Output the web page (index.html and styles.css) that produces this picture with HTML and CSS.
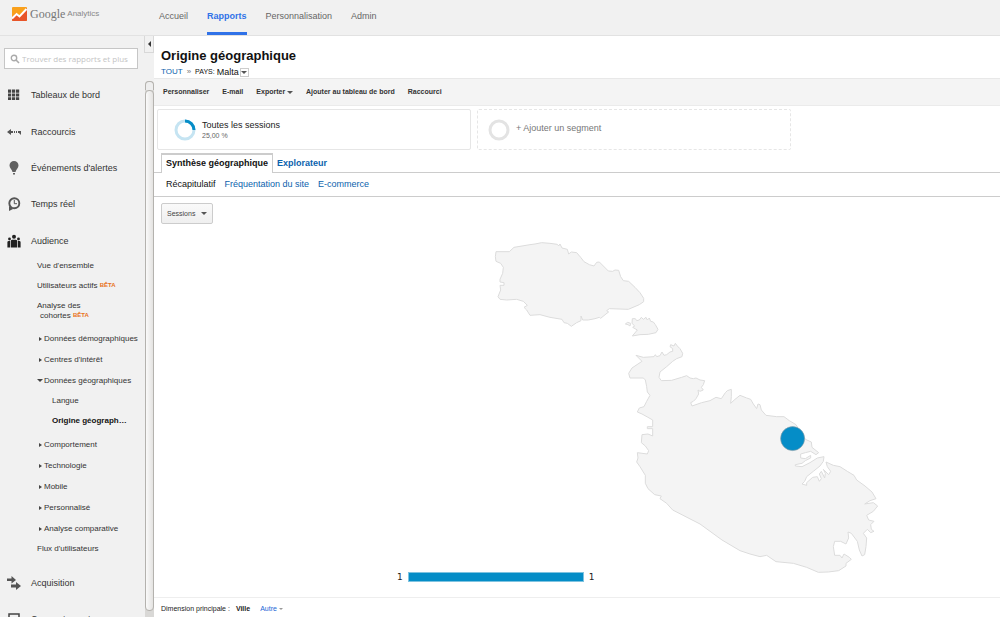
FILE: index.html
```html
<!DOCTYPE html>
<html lang="fr">
<head>
<meta charset="utf-8">
<title>Google Analytics – Origine géographique</title>
<link rel="stylesheet" href="styles.css">
</head>
<body>
<header class="topbar">
  <a class="brand" href="#">
    <svg class="brand-mark" viewBox="0 0 15 14" aria-hidden="true">
      <rect width="15" height="14" rx="1" fill="#f9a01b"/>
      <path d="M0 10 4 6l3 3 8-8v12a1 1 0 0 1-1 1H1a1 1 0 0 1-1-1z" fill="#e8552a"/>
      <path d="M0 11.500 4.500 7l3 2.500L14.500 2" fill="none" stroke="#fff" stroke-width="2"/>
    </svg>
    <span class="brand-google">Google</span>
    <span class="brand-product">Analytics</span>
  </a>
  <nav class="topnav">
    <a href="#">Accueil</a>
    <a href="#" class="active">Rapports</a>
    <a href="#">Personnalisation</a>
    <a href="#">Admin</a>
  </nav>
</header>

<div class="layout">
  <aside class="sidebar">
    <div class="side-content">
      <label class="search">
        <svg viewBox="0 0 10 10" aria-hidden="true"><circle cx="4" cy="4" r="2.700" fill="none" stroke="#aaa" stroke-width="1.400"/><path d="m6 6 3 3" stroke="#aaa" stroke-width="1.600"/></svg>
        <input type="text" placeholder="Trouver des rapports et plus" aria-label="Trouver des rapports et plus">
      </label>
      <nav>
        <ul class="main-items">
          <li><a href="#"><svg viewBox="0 0 14 14" aria-hidden="true"><path d="M1 1.500h3.200v3.200H1zm4 0h3.200v3.200H5zm4 0h3.200v3.200H9zM1 5.400h3.200v3.200H1zm4 0h3.200v3.200H5zm4 0h3.200v3.200H9zM1 9.300h3.200v2.700H1zm4 0h3.200v2.700H5zm4 0h3.200v2.700H9z" fill="#444"/></svg>Tableaux de bord</a></li>
          <li><a href="#"><svg viewBox="0 0 14 14" aria-hidden="true"><path d="M0 7l4-3v2h2v2H4v2zM7 6h1v2H7zm2 0h1v2H9zm2 0h3v4l-2-2h-1z" fill="#555"/></svg>Raccourcis</a></li>
          <li><a href="#"><svg viewBox="0 0 14 14" aria-hidden="true"><path d="M7 0a4.500 4.500 0 0 1 4.500 4.500C11.500 7 9 8.500 8.500 11h-3C5 8.500 2.500 7 2.500 4.500A4.500 4.500 0 0 1 7 0zM6 12h2v1.500H6z" fill="#606060"/></svg>Événements d'alertes</a></li>
          <li><a href="#"><svg viewBox="0 0 14 14" aria-hidden="true"><circle cx="7.300" cy="6.300" r="5" fill="none" stroke="#555" stroke-width="1.900"/><path d="M2 9v5l4-2z" fill="#555"/><path d="M7.300 3v3.700H10" fill="none" stroke="#555"/></svg>Temps réel</a></li>
          <li><a href="#"><svg viewBox="0 0 14 14" aria-hidden="true"><g fill="#222"><circle cx="7" cy="2.700" r="2"/><circle cx="2.500" cy="5" r="1.400"/><circle cx="11.500" cy="5" r="1.400"/><path d="M3.700 13.500V7.300q0-1.500 1.500-1.500h3.600q1.500 0 1.500 1.500v6.200zM.4 13.500V8.300q0-1.300 1.300-1.300H3v6.500zM13.600 13.500V8.300q0-1.300-1.300-1.300H11v6.500z"/></g></svg>Audience</a></li>
        </ul>
        <ul class="sub-items">
          <li><a href="#">Vue d'ensemble</a></li>
          <li><a href="#">Utilisateurs actifs <sup>BÊTA</sup></a></li>
          <li class="two-lines"><a href="#">Analyse des<br>cohortes <sup>BÊTA</sup></a></li>
          <li class="group"><a href="#">Données démographiques</a></li>
          <li class="group"><a href="#">Centres d'intérêt</a></li>
          <li class="group open"><a href="#">Données géographiques</a>
            <ul class="leaf-items">
              <li><a href="#">Langue</a></li>
              <li><a href="#" class="current">Origine géograph…</a></li>
            </ul>
          </li>
          <li class="group"><a href="#">Comportement</a></li>
          <li class="group"><a href="#">Technologie</a></li>
          <li class="group"><a href="#">Mobile</a></li>
          <li class="group"><a href="#">Personnalisé</a></li>
          <li class="group"><a href="#">Analyse comparative</a></li>
          <li><a href="#">Flux d'utilisateurs</a></li>
        </ul>
        <ul class="main-items tail">
          <li><a href="#"><svg viewBox="0 0 14 14" aria-hidden="true"><path d="M0 2.500h4.500V0L9 4 4.500 7.500V5H0zM4 8.500h5V6l5 4-5 4v-2.500H4z" fill="#555"/></svg>Acquisition</a></li>
          <li><a href="#"><svg viewBox="0 0 14 14" aria-hidden="true"><path d="M2 2h10v8H2z" fill="none" stroke="#444" stroke-width="1.500"/></svg>Comportement</a></li>
        </ul>
      </nav>
    </div>
    <div class="rail">
      <button class="collapse" aria-label="Réduire le menu"></button>
      <div class="track"><span class="track-up"></span><span class="thumb"></span></div>
    </div>
  </aside>

  <main class="report">
    <h1>Origine géographique</h1>
    <div class="crumbs">
      <a href="#">TOUT</a><span class="sep">»</span><span class="dim">PAYS:</span><span class="value">Malta</span>
      <button class="crumb-menu" aria-label="Changer de pays"><i class="caret"></i></button>
    </div>
    <div class="toolbar">
      <button>Personnaliser</button>
      <button>E-mail</button>
      <button>Exporter <i class="caret"></i></button>
      <button>Ajouter au tableau de bord</button>
      <button>Raccourci</button>
    </div>
    <div class="segments">
      <section class="segment">
        <svg viewBox="0 0 22 22" aria-hidden="true"><circle cx="11" cy="11" r="9" fill="none" stroke="#c5e4f2" stroke-width="3"/><path d="M11 2a9 9 0 0 1 9 9" fill="none" stroke="#058dc7" stroke-width="3"/></svg>
        <div><div class="segment-name">Toutes les sessions</div><div class="segment-share">25,00 %</div></div>
      </section>
      <button class="segment add">
        <svg viewBox="0 0 22 22" aria-hidden="true"><circle cx="11" cy="11" r="9" fill="none" stroke="#e3e3e3" stroke-width="3"/></svg>
        <span>+ Ajouter un segment</span>
      </button>
    </div>
    <nav class="tabs">
      <a href="#" class="selected">Synthèse géographique</a>
      <a href="#">Explorateur</a>
    </nav>
    <nav class="subtabs">
      <a href="#" class="selected">Récapitulatif</a>
      <a href="#">Fréquentation du site</a>
      <a href="#">E-commerce</a>
    </nav>
    <button class="metric">Sessions <i class="caret"></i></button>
    <svg class="map" viewBox="154 224 846 343" role="img" aria-label="Carte de Malte">
      <g fill="#f4f4f4" stroke="#dcdcdc" stroke-width="3" stroke-linejoin="round">
        <g transform="translate(480 230) scale(.33333)">
          <path d="M48 65 88 65 102 52 150 44 165 42 185 38 210 40 232 43 236 48 240 42 246 54 262 58 266 72 274 66 290 68 302 82 312 95 328 104 342 108 350 97 358 96 370 108 385 123 398 124 405 120 416 121 422 140 430 152 446 154 465 172 480 188 491 205 491 215 478 224 445 238 388 236 380 242 386 246 378 252 362 265 358 262 345 266 325 270 308 270 303 258 303 272 290 278 274 289 262 280 252 278 246 268 210 262 180 254 150 256 140 240 132 232 142 226 130 214 110 208 80 210 60 208 54 200 62 180 60 166 72 166 72 158 60 156 60 148 68 130 70 112 62 100 48 94 46 80Z"/>
          <path d="M457 266 466 266 470 272 478 270 484 262 490 268 498 262 502 270 508 264 512 274 520 276 526 284 534 298 528 308 505 313 480 314 457 318 472 300 458 292 464 288 456 280Z"/>
          <path d="M436 282 443 277 452 280 450 288 444 284Z"/>
        </g>
        <g transform="translate(620 330) scale(.33333)">
          <path d="M48 76 70 82 102 80 106 74 110 80 120 77 126 66 132 76 140 74 150 66 158 64 158 56 150 50 152 44 162 48 166 40 172 48 180 56 188 70 186 80 170 86 158 94 140 110 120 126 117 142 124 152 155 151 185 142 200 137 210 144 220 146 228 144 240 150 254 152 250 164 244 172 250 180 240 184 234 180 236 192 228 206 220 214 212 218 216 228 245 218 270 212 288 202 304 206 316 188 322 182 334 178 334 200 332 220 345 208 360 196 380 204 392 208 400 222 410 236 414 222 420 224 424 240 438 256 470 260 492 260 508 272 528 284 556 328 574 336 576 352 596 368 588 374 572 364 556 368 542 372 542 384 556 386 572 376 572 384 556 392 546 400 526 404 526 408 546 410 570 398 592 384 612 380 610 394 600 408 580 424 560 440 554 454 546 462 560 466 560 458 578 442 592 440 598 454 604 446 598 432 604 424 614 444 616 430 610 418 626 434 632 424 622 410 618 396 640 406 660 410 682 424 702 436 710 450 735 468 756 486 768 506 750 512 734 522 760 518 773 528 760 544 740 556 746 570 762 574 752 584 754 598 762 604 752 608 742 598 730 610 740 624 738 650 734 674 726 678 718 660 712 634 694 610 684 606 686 624 678 642 662 634 644 634 640 650 644 676 660 676 666 684 672 672 688 682 694 688 678 700 678 708 656 722 625 726 595 727 560 712 520 700 468 695 440 676 420 680 390 672 360 662 306 630 240 582 158 540 140 520 120 506 124 498 104 494 84 476 76 460 76 436 60 410 50 396 54 384 52 368 82 372 86 362 76 348 64 338 66 314 84 312 98 318 98 296 82 296 82 290 98 290 98 270 84 262 66 252 52 246 58 234 72 230 80 214 90 196 82 186 80 170 76 150 70 144 30 144 26 130 36 114 66 94Z"/>
        </g>
      </g>
      <circle cx="792.600" cy="438.600" r="12" fill="#058dc7" stroke="#8a9aa3" stroke-width=".6"/>
    </svg>
    <div class="legend"><span>1</span><span class="legend-bar"></span><span>1</span></div>
    <div class="dimension">
      <span>Dimension principale :</span><strong>Ville</strong><a href="#">Autre <i class="caret"></i></a>
    </div>
  </main>
</div>
</body>
</html>
```
FILE: styles.css
```css
* { box-sizing: border-box; }

body {
  margin: 0;
  height: 100vh;
  display: flex;
  flex-direction: column;
  overflow: hidden;
  background: #fff;
  color: #222;
  font-family: "Liberation Sans", Arial, sans-serif;
  font-size: 9px;
  line-height: 12px;
}

a { color: #0b62ad; text-decoration: none; }
ul { margin: 0; padding: 0; list-style: none; }
button { margin: 0; padding: 0; border: 0; background: none; color: inherit; font: inherit; }

.caret {
  display: inline-block;
  vertical-align: middle;
  border: 3px solid transparent;
  border-top-color: #555;
  border-bottom-width: 0;
}

/* Top bar */
.topbar {
  flex: none;
  display: flex;
  height: 36px;
  background: #f1f1f1;
  border-bottom: 1px solid #e2e2e2;
}
.brand {
  display: flex;
  align-items: center;
  width: 159px;
  padding: 0 0 7px 12px;
  color: #777;
}
.brand-mark { width: 15px; height: 14px; margin-right: 3px; }
.brand-google { font-family: "Liberation Serif", serif; font-size: 12px; margin-right: 2px; }
.brand-product { font-size: 8px; line-height: 14px; color: #888; }
.topnav { display: flex; gap: 19px; }
.topnav a { padding-top: 10px; color: #666; }
.topnav .active { color: #3072e8; font-weight: bold; border-bottom: 3px solid #3072e8; }

.layout { flex: 1; display: flex; min-height: 0; }

/* Sidebar */
.sidebar { flex: none; display: flex; width: 154px; background: #f1f1f1; font-size: 8px; }
.side-content { width: 144px; overflow: hidden; }
.sidebar a { color: #333; }
.search {
  display: flex;
  align-items: center;
  height: 21px;
  margin: 12px 6px 8px 4px;
  padding-left: 5px;
  background: #fff;
  border: 1px solid #c6c6c6;
}
.search svg { flex: none; width: 10px; height: 10px; margin-right: 2px; }
.search input {
  flex: 1;
  min-width: 0;
  padding: 0;
  border: 0;
  outline: 0;
  background: none;
  font-family: "Open Sans", sans-serif;
  font-size: 8px;
}
.search input::placeholder { color: #c4c4c4; }
.main-items { display: flex; flex-direction: column; height: 182px; }
.main-items li { flex: 1; display: flex; }
.main-items a { display: flex; align-items: center; gap: 10px; padding-left: 7px; font-size: 9px; }
.main-items svg { width: 14px; height: 14px; }
.main-items.tail { height: 72px; margin-top: 6px; }

.sub-items { margin-top: -3px; padding-left: 37px; white-space: nowrap; line-height: 20px; }
.sub-items sup { color: #e8711c; font-size: 6px; font-weight: bold; line-height: 1; vertical-align: 1px; }
.sub-items .two-lines { padding: 5px 0 7px 3px; line-height: 10px; text-indent: -3px; }
.group > a { display: flex; align-items: center; gap: 2px; padding-left: 2px; line-height: 21px; }
.group > a::before {
  content: "";
  width: 0;
  border: 2px solid transparent;
  border-left: 3px solid #444;
  border-right-width: 0;
}
.group.open > a { padding-left: 0; gap: 1px; }
.group.open > a::before { border: 3px solid transparent; border-top-color: #444; border-bottom-width: 0; }
.leaf-items { padding: 0 0 3px 15px; }
.sidebar .current { color: #111; font-weight: bold; }

.rail { display: flex; flex-direction: column; width: 10px; }
.collapse {
  display: flex;
  align-items: center;
  justify-content: center;
  height: 17px;
  margin-bottom: 28px;
  border: 1px solid #d8d8d8;
  border-top: 0;
}
.collapse::before {
  content: "";
  border: 3px solid transparent;
  border-right-color: #333;
  border-left-width: 0;
}
.track {
  flex: 1;
  display: flex;
  flex-direction: column;
  margin-left: 1px;
  padding-bottom: 6px;
  background: #d9d8d6;
  border-radius: 4px 4px 0 0;
}
.track-up { height: 9px; border: 1px solid #b4b2ae; border-bottom: 0; border-radius: 4px 4px 0 0; background: #eee; }
.thumb { flex: 1; border: 1px solid #b4b2ae; border-radius: 4px; background: linear-gradient(90deg, #fafafa, #e4e3e1); }

/* Report */
.report { flex: 1; min-width: 0; padding-top: 10px; }
.report h1 { margin: 0; padding-left: 7px; font-size: 13px; line-height: 20px; color: #111; }
.crumbs { display: flex; align-items: center; height: 12px; padding-left: 7px; font-size: 8px; color: #111; }
.crumbs .sep { margin: 0 4px; color: #777; }
.crumbs .dim { margin-right: 2px; font-size: 7px; }
.crumbs .value { margin-right: 1px; font-size: 9px; }
.crumb-menu { display: flex; align-items: center; justify-content: center; width: 9px; height: 9px; border: 1px solid #ccc; }
.toolbar {
  display: flex;
  align-items: center;
  gap: 13px;
  height: 28px;
  padding-left: 9px;
  background: #f4f4f4;
  border-top: 1px solid #e8e8e8;
  border-bottom: 1px solid #ebebeb;
  color: #333;
  font-size: 7px;
  font-weight: bold;
}
.segments { display: flex; gap: 6px; padding: 3px 3px 0; }
.segment {
  flex: 0 1 314px;
  display: flex;
  align-items: center;
  gap: 6px;
  height: 41px;
  padding-left: 16px;
  border: 1px solid #e6e6e6;
  border-radius: 2px;
  background: #fff;
}
.segment svg { width: 22px; height: 22px; }
.segment-name { line-height: 11px; }
.segment-share { color: #666; font-size: 7px; line-height: 9px; }
.segment.add { padding-left: 10px; border-style: dashed; color: #777; }
.segment.add span { padding-bottom: 4px; }

.tabs { display: flex; height: 20px; margin-top: 3px; padding-left: 7px; border-bottom: 1px solid #ccc; font-weight: bold; line-height: 21px; }
.tabs a { padding: 0 4px; }
.tabs .selected { height: 20px; border: 1px solid #ccc; border-top-width: 2px; border-bottom: 0; background: #fff; color: #111; line-height: 17px; }
.subtabs { display: flex; gap: 9px; padding-left: 12px; border-bottom: 1px solid #ccc; line-height: 23px; }
.subtabs .selected { color: #111; }
.metric {
  display: flex;
  align-items: center;
  justify-content: space-between;
  width: 52px;
  height: 21px;
  margin: 6px 0 0 7px;
  padding: 0 5px;
  border: 1px solid #ccc;
  border-radius: 2px;
  background: linear-gradient(#fafafa, #efefef);
  color: #444;
  font-size: 7px;
}
.map { display: block; width: 100%; overflow: visible; }
.legend {
  display: flex;
  align-items: center;
  gap: 5px;
  height: 20px;
  margin-bottom: 10px;
  padding-left: 243px;
  font-family: "DejaVu Sans", sans-serif;
}
.legend-bar { width: 176px; height: 10px; background: #058dc7; border: 1px solid #7fc3e0; }
.dimension { display: flex; gap: 6px; padding: 5px 7px; border-top: 1px solid #eee; font-size: 7px; }
.dimension a { margin-left: 4px; color: #1a66d6; }
.dimension .caret { border-width: 2px 2px 0; border-top-color: #999; }
```
